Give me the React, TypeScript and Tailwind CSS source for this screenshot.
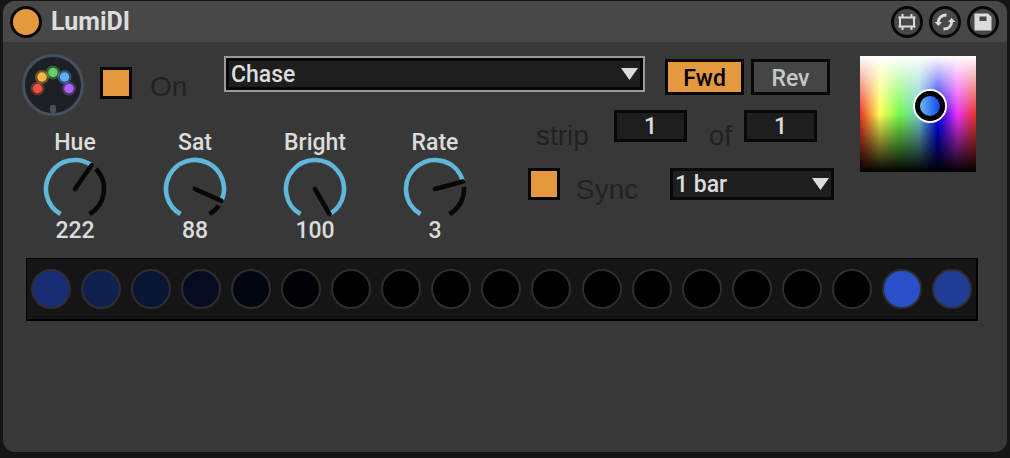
import { useState } from "react";

const LED_COLORS = [
    "#182d74", "#10204f", "#091735", "#050b20", "#02060f", "#000106",
    "#000", "#000", "#000", "#000", "#000", "#000",
    "#000", "#000", "#000", "#000", "#000",
    "#2a50c9", "#203d98",
];

const LOGO_DOTS = [
    { x: 15.5, y: 34.5, color: "#ef5145" },
    { x: 20, y: 23, color: "#f8b53f" },
    { x: 31, y: 18.5, color: "#66cf66" },
    { x: 42.5, y: 23, color: "#5ab0fb" },
    { x: 47, y: 34.5, color: "#ae62fa" },
];

// angles are degrees clockwise from twelve o'clock
const point = (angle: number, radius: number) => {
    const rad = (angle * Math.PI) / 180;
    return `${32 + radius * Math.sin(rad)} ${32 - radius * Math.cos(rad)}`;
};

const arc = (from: number, to: number) =>
    `M${point(from, 29)} A29 29 0 ${to - from > 180 ? 1 : 0} 1 ${point(to, 29)}`;

interface KnobProps {
    label: string;
    initial: number;
    min?: number;
    max: number;
}

const Knob = ({ label, initial, min = 0, max }: KnobProps) => {
    const [value, setValue] = useState(initial);
    const angle = ((value - min) / (max - min)) * 300 - 150;

    return (
        <label className="flex w-[120px] flex-col items-center text-[23px] leading-6 font-medium text-[#dcdcdc]">
            {label}
            <span className="relative my-[2px] block h-16 w-16">
                <svg viewBox="0 0 64 64" className="h-16 w-16" fill="none">
                    <path d={arc(-150, angle)} stroke="#5fb8d9" strokeWidth="4.6" />
                    {angle + 11 < 150 && (
                        <path d={arc(angle + 11, 150)} stroke="#070707" strokeWidth="4.6" />
                    )}
                    <path
                        d={`M32 32 L${point(angle, 29)}`}
                        stroke="#070707"
                        strokeWidth="4.6"
                        strokeLinecap="round"
                    />
                </svg>
                <input
                    type="range"
                    min={min}
                    max={max}
                    step="any"
                    value={value}
                    onChange={(e) => setValue(Number(e.target.value))}
                    className="absolute inset-0 h-full w-full cursor-pointer opacity-0"
                />
            </span>
            <span className="-mt-1">{Math.round(value)}</span>
        </label>
    );
};

const Checkbox = ({ id }: { id: string }) => (
    <input
        id={id}
        type="checkbox"
        defaultChecked
        className="h-8 w-8 shrink-0 appearance-none border-[3px] border-[#080808] bg-[#1e1e1e] checked:bg-[#e5993f]"
    />
);

const Arrow = () => (
    <svg viewBox="0 0 17 12" className="pointer-events-none absolute top-1/2 right-[5px] h-3 w-[17px] -translate-y-1/2">
        <path d="M0 0H17L8.5 12Z" fill="#dcdcdc" />
    </svg>
);

const Logo = () => (
    <svg viewBox="0 0 62 62" className="h-[62px] w-[62px]">
        <circle cx="31" cy="31" r="29.5" fill="#1c1f24" stroke="#454f5e" strokeWidth="3" />
        {LOGO_DOTS.map((dot) => (
            <g key={dot.color} fill={dot.color}>
                <circle cx={dot.x} cy={dot.y} r="7" opacity="0.35" />
                <circle cx={dot.x} cy={dot.y} r="4.7" />
            </g>
        ))}
        <rect x="28" y="51" width="6" height="8" rx="2" fill="#454f5e" />
    </svg>
);

const ICON_BUTTON = "flex h-8 w-8 items-center justify-center rounded-full border-[3px] border-[#080808] text-[#dcdcdc]";

const TitleBar = () => (
    <header className="flex h-[41px] items-center bg-[#484848] pr-2 pl-[7px]">
        <button aria-label="Device on" className="h-8 w-8 rounded-full border-[3px] border-[#080808] bg-[#e5993f]" />
        <h1 className="ml-[9px] text-[25px] leading-8 font-bold text-[#dcdcdc]">LumiDI</h1>
        <div className="ml-auto flex gap-[6px]">
            <button aria-label="Edit device" className={ICON_BUTTON}>
                <svg viewBox="0 0 18 18" className="h-[18px] w-[18px] shrink-0" fill="none" stroke="currentColor" strokeWidth="2">
                    <path d="M2 4.500H16V13.500H2Z M4.500 1V4.500 M13.500 1V4.500 M4.500 13.500V17 M13.500 13.500V17" />
                    <path d="M0.500 4.500H2 M16 4.500H17.500 M0.500 13.500H2 M16 13.500H17.500" />
                </svg>
            </button>
            <button aria-label="Hot-swap" className={ICON_BUTTON}>
                <svg viewBox="0 0 22 18" className="h-[18px] w-[22px] shrink-0" fill="none" stroke="currentColor" strokeWidth="2.8">
                    <path d="M12.500 2C8 2 4.500 4.500 4.200 9.500" />
                    <path d="M9.500 16C14 16 17.500 13.500 17.800 8.500" />
                    <path d="M0.500 9H8L4.500 13Z M21.500 9H14L17.500 5Z" fill="currentColor" stroke="none" />
                </svg>
            </button>
            <button aria-label="Save preset" className={ICON_BUTTON}>
                <svg viewBox="0 0 18 18" className="h-[18px] w-[18px] shrink-0">
                    <path fillRule="evenodd" fill="currentColor" d="M0.500 0.500H14L17.500 4V17.500H0.500Z M5.500 3.500V8H12.500V3.500Z" />
                </svg>
            </button>
        </div>
    </header>
);

const ColorField = () => (
    <div
        role="img"
        aria-label="Colour field"
        className="relative h-[116px] w-[116px] shrink-0 bg-[linear-gradient(to_bottom,#fff,#fff0_50%,#0000_50%,#000),linear-gradient(to_right,#ea3323,#fffe54_17%,#74f94c_34%,#6fcbd0_51%,#0000f0_67%,#ea33f7_84%,#ea3323)]"
    >
        <div className="absolute top-[33px] left-[53px] h-[34px] w-[34px] rounded-full border-2 border-white">
            <div className="h-full w-full rounded-full border-[5px] border-black bg-linear-to-r from-[#6cb4f0] to-[#1c3cf0]" />
        </div>
    </div>
);

const CAPTION = "font-['Liberation_Sans',sans-serif] text-[28px] leading-8 text-[#222]";
const SELECT = "block h-8 w-full appearance-none border-[3px] border-[#080808] bg-[#1e1e1e] pt-[2px] pl-[2px] text-[23px] leading-6 font-medium text-[#dcdcdc]";
const NUMBER_BOX = "h-8 w-[73px] border-[3px] border-[#080808] bg-[#1e1e1e] pt-[2px] text-center text-[23px] font-medium text-[#dcdcdc]";

export default function App() {
    const [direction, setDirection] = useState("Fwd");

    return (
        <div className="flex min-h-screen flex-col bg-[#151515] px-[3px] pt-px pb-[6px] font-[Roboto,sans-serif]">
            <main className="flex-1 overflow-hidden rounded-xl bg-[#383838]">
                <TitleBar />

                <div className="flex gap-[26px] pt-3 pr-[31px] pl-3">
                    <div className="min-w-0 flex-1">
                        <div className="flex items-start pt-[2px] pr-1 pl-[7px]">
                            <div className="-mt-[2px] flex w-[202px] shrink-0 items-center">
                                <Logo />
                                <div className="ml-4 flex gap-[18px]">
                                    <Checkbox id="on" />
                                    <label htmlFor="on" className={`pt-1 ${CAPTION}`}>On</label>
                                </div>
                            </div>
                            <div className="relative min-w-0 flex-1 border-2 border-[#9a9a9a]">
                                <select aria-label="Effect" className={SELECT}>
                                    <option>Chase</option>
                                </select>
                                <Arrow />
                            </div>
                            <div className="mt-[3px] ml-5 flex gap-[7px]">
                                {["Fwd", "Rev"].map((name) => (
                                    <button
                                        key={name}
                                        onClick={() => setDirection(name)}
                                        className={`h-9 w-[79px] border-[3px] border-[#080808] pt-1 text-[23px] leading-6 font-medium ${
                                            direction === name
                                                ? "bg-[#e5993f] text-black"
                                                : "bg-[#454545] text-[#c8c8c8]"
                                        }`}
                                    >
                                        {name}
                                    </button>
                                ))}
                            </div>
                        </div>

                        <div className="flex items-start">
                            <div className="flex pt-[15px]">
                                <Knob label="Hue" initial={222} max={360} />
                                <Knob label="Sat" initial={88} max={100} />
                                <Knob label="Bright" initial={100} max={100} />
                                <Knob label="Rate" initial={3} min={0} max={4} />
                            </div>

                            {/* the strip fields tuck up under the direction buttons */}
                            <div className="-mt-[6px] ml-auto flex w-[306px] flex-col gap-[26px]">
                                <div className="flex h-8 items-start pl-2">
                                    <label htmlFor="strip" className={`w-[78px] pt-[10px] ${CAPTION}`}>strip</label>
                                    <input id="strip" defaultValue="1" className={NUMBER_BOX} />
                                    <label htmlFor="strip-count" className={`w-[57px] pt-[10px] pr-3 text-right ${CAPTION}`}>of</label>
                                    <input id="strip-count" defaultValue="1" className={NUMBER_BOX} />
                                </div>
                                <div className="flex items-start">
                                    <Checkbox id="sync" />
                                    <label htmlFor="sync" className={`ml-4 pt-[6px] ${CAPTION}`}>Sync</label>
                                    <div className="relative ml-auto w-[164px]">
                                        <select aria-label="Sync interval" className={SELECT}>
                                            <option>1 bar</option>
                                        </select>
                                        <Arrow />
                                    </div>
                                </div>
                            </div>
                        </div>
                    </div>

                    <div className="pt-[2px]">
                        <ColorField />
                    </div>
                </div>

                <div className="mt-[15px] mr-[29px] ml-[23px] flex h-[63px] items-center justify-between border border-r-2 border-b-2 border-black bg-[#151515] px-1">
                    {LED_COLORS.map((color, i) => (
                        <div
                            key={i}
                            className="h-10 w-10 rounded-full border-2 border-[#2e2e2e]"
                            style={{ backgroundColor: color }}
                        />
                    ))}
                </div>
            </main>
        </div>
    );
}
